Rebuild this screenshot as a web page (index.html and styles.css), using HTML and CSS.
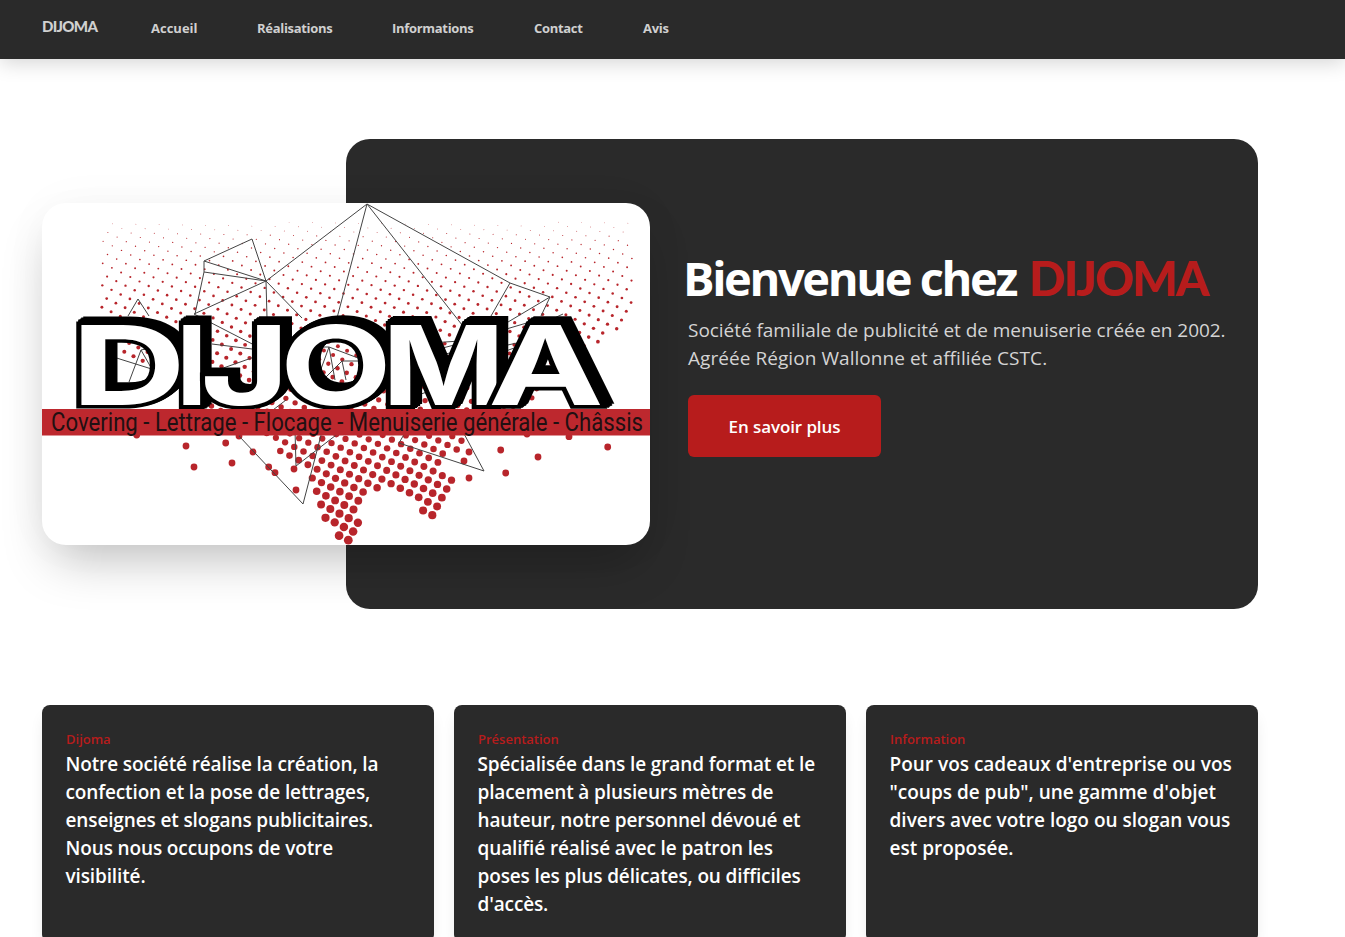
FILE: index.html
```html
<!DOCTYPE html>
<html lang="fr">
<head>
<meta charset="utf-8">
<title>DIJOMA</title>
<link rel="stylesheet" href="styles.css">
</head>
<body>
<nav class="nav">
  <a class="brand">DIJOMA</a>
  <a class="link l1">Accueil</a>
  <a class="link l2">Réalisations</a>
  <a class="link l3">Informations</a>
  <a class="link l4">Contact</a>
  <a class="link l5">Avis</a>
</nav>
<main class="page">
  <section class="hero">
    <div class="panel">
      <div class="copy">
        <h1 class="title">Bienvenue chez <span class="accent">DIJOMA</span></h1>
        <p class="lede"><span class="row r1">Société familiale de publicité et de menuiserie créée en 2002.</span><span class="row r2">Agréée Région Wallonne et affiliée CSTC.</span></p>
        <a class="button">En savoir plus</a>
      </div>
    </div>
    <div class="visual">
      <svg class="logo" viewBox="42 203 608 342" width="608" height="342">
        <g id="dots" fill="#b8252b"></g>
        <path fill="none" stroke="#444" stroke-width="1" d="M266 281L367 204L337 318M367 204L466 330M367 204L510 283L550 297L503 325M550 297L541 316M510 283L491 316M563 314L550 320M204 261L252 239L266 281ZM204 261V272L195 314M204 272L266 281L194 314L260 348M266 281L267 318M266 281L302 318M128 316L138 299L149 316M212 344L260 350M212 372L260 355M107 355L158 371M129 382L141 350L153 371M141 350L159 346M159 365L143 382M314 347H329L317 380M329 347L335 380M329 347L366 361H342L325 378M342 361L346 380M430 343L460 341M435 350L458 344M440 355L455 352M503 330L530 322M503 346L517 343M503 352L517 347M286 400L239 436L303 504L325 420M295 430L296 466L340 432M420 407L399 443L484 471L462 430M415 396L427 392"/>
        <g class="wordmark">
          <text transform="translate(71 404.5) scale(1.45 1)">D</text>
          <text transform="translate(176 404.5) scale(1.02 1)">I</text>
          <text transform="translate(200 404.5) scale(1.4 1)">J</text>
          <text transform="translate(280 404.5) scale(1.32 1)">O</text>
          <text transform="translate(382 404.5) scale(1.2 1)">M</text>
          <text transform="translate(488 404.5) scale(1.41 1)">A</text>
        </g>
        <rect x="42" y="409" width="608" height="26.5" fill="#bd282e"/>
        <text class="strap" x="51" y="431" textLength="592" lengthAdjust="spacingAndGlyphs">Covering - Lettrage - Flocage - Menuiserie générale - Châssis</text>
      </svg>
    </div>
  </section>
  <section class="cards">
    <article class="card"><h2 class="label">Dijoma</h2><p class="text">Notre société réalise la création, la<br>confection et la pose de lettrages,<br>enseignes et slogans publicitaires.<br>Nous nous occupons de votre<br>visibilité.</p></article>
    <article class="card"><h2 class="label">Présentation</h2><p class="text">Spécialisée dans le grand format et le<br>placement à plusieurs mètres de<br>hauteur, notre personnel dévoué et<br>qualifié réalisé avec le patron les<br>poses les plus délicates, ou difficiles<br>d'accès.</p></article>
    <article class="card"><h2 class="label">Information</h2><p class="text wide">Pour vos cadeaux d'entreprise ou vos<br>"coups de pub", une gamme d'objet<br>divers avec votre logo ou slogan vous<br>est proposée.</p></article>
  </section>
</main>
<script src="script.js"></script>
</body>
</html>
```
FILE: styles.css
```css
* { box-sizing: border-box; }
body { margin: 0; overflow: hidden; height: 937px; background: #fff; font-family: "Open Sans", "Noto Sans", sans-serif; }
h1, h2, p { margin: 0; }
.nav { height: 59px; padding-left: 42px; display: flex; align-items: flex-start; background: #2a2a2a; color: #d0d0d0; box-shadow: 0 4px 20px rgba(0,0,0,.17); white-space: nowrap; }
.brand { width: 109px; padding-top: 16px; font-family: Lato, sans-serif; font-size: 15px; line-height: 20px; font-weight: 900; letter-spacing: -.7px; }
.link { padding-top: 18px; font-size: 13px; line-height: 20px; font-weight: 700; letter-spacing: -.3px; }
.l1 { width: 106px; letter-spacing: 0; }
.l2 { width: 135px; }
.l3 { width: 142px; }
.l4 { width: 109px; }
.page { width: 1216px; margin-left: 42px; padding-top: 80px; }
.hero { display: grid; grid-template-columns: 304px 304px 608px; grid-template-rows: 470px; align-items: center; }
.panel { grid-column: 2 / 4; grid-row: 1; height: 470px; padding: 113px 0 0 342px; border-radius: 24px; background: #2a2a2a; }
.visual { grid-column: 1 / 3; grid-row: 1; height: 342px; border-radius: 24px; background: #fff; box-shadow: 0 25px 50px -12px rgba(0,0,0,.25), 0 0 50px rgba(0,0,0,.03); overflow: hidden; }
.logo { display: block; }
.title { margin-left: -5px; color: #fff; font-size: 47px; line-height: 52px; font-weight: 700; letter-spacing: -2.4px; white-space: nowrap; }
.accent { margin-left: 3px; color: #b71c1c; font-family: Lato, sans-serif; font-weight: 900; font-size: 48px; line-height: 1; letter-spacing: -1.9px; }
.lede { margin-top: 12px; color: #d4d4d4; font-size: 19px; line-height: 28px; white-space: nowrap; }
.row { display: block; }
.r1 { letter-spacing: -.04px; }
.r2 { letter-spacing: .06px; }
.button { display: flex; width: 193px; height: 62px; margin-top: 23px; align-items: center; justify-content: center; border-radius: 6px; background: #b71c1c; color: #fff; font-size: 17px; font-weight: 600; letter-spacing: -.1px; }
.cards { display: grid; grid-template-columns: repeat(3, 392px); gap: 20px; margin-top: 96px; }
.card { height: 237px; padding: 24px; border-radius: 8px; background: #2a2a2a; box-shadow: 0 10px 15px -3px rgba(0,0,0,.1); white-space: nowrap; }
.label { color: #b71c1c; font-size: 13px; line-height: 21px; font-weight: 600; }
.text { margin-left: -.5px; color: #fff; font-size: 19px; line-height: 28px; font-weight: 600; letter-spacing: -.13px; }
.wide { letter-spacing: 0; }
.wordmark { font-family: Inter, "Liberation Sans", sans-serif; font-size: 110px; font-weight: 700; fill: #fff; filter: drop-shadow(2px -1px 0 #000) drop-shadow(2px -2px 0 #000) drop-shadow(3px -2px 0 #000); }
.wordmark text { stroke: #000; stroke-width: 9px; paint-order: stroke; vector-effect: non-scaling-stroke; }
.strap { fill: #211012; font-family: Roboto, sans-serif; font-size: 25px; }
```
FILE: script.js
```js
const group = document.getElementById('dots');
const upper = [[100,222],[632,222],[632,322],[600,345],[555,380],[520,409],[475,436],[272,436],[180,400],[120,350],[100,320]];
const lower = [[270,430],[475,430],[470,444],[455,453],[444,462],[455,482],[450,499],[438,520],[420,514],[418,502],[406,494],[392,489],[374,492],[361,505],[360,528],[352,547],[337,541],[328,525],[318,510],[308,470],[290,466],[274,450]];
const scattered = [[186,446],[194,467],[225.7,443],[232,463],[239,436],[253,452],[268.7,467],[275,472.7],[296,490],[294,469],[136.7,435],[607.7,447],[538,457],[500.7,450],[505.7,473],[469,478],[464,461],[469,452],[569,436.7],[527,434]];

function inside(shape, x, y) {
  let hit = false;
  for (let i = 0, j = shape.length - 1; i < shape.length; j = i++) {
    const [ax, ay] = shape[i], [bx, by] = shape[j];
    if ((ay > y) !== (by > y) && x < (bx - ax) * (y - ay) / (by - ay) + ax) hit = !hit;
  }
  return hit;
}
function dot(x, y, r) {
  const c = document.createElementNS('http://www.w3.org/2000/svg', 'circle');
  c.setAttribute('cx', x.toFixed(2));
  c.setAttribute('cy', y.toFixed(2));
  c.setAttribute('r', r.toFixed(2));
  group.appendChild(c);
}
// Halftone lattice: dots grow towards the bottom.
for (let m = -60; m < 90; m++) {
  for (let n = -60; n < 60; n++) {
    const x = 102.7 + 9.2 * m + 4.8 * n;
    const y = 263.3 + 4.55 * m - 8.73 * n;
    if (inside(upper, x, y) || inside(lower, x, y)) dot(x, y, Math.max(0.35, 0.4 + (y - 225) * 0.0127));
  }
}
scattered.forEach(([x, y]) => dot(x, y, 3.4));
```
